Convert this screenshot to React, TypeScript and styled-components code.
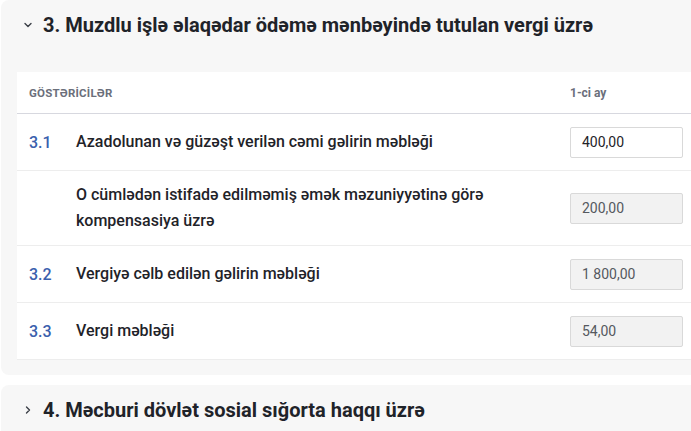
import React from "react";
import styled, { createGlobalStyle } from "styled-components";

const Global = createGlobalStyle`
  html, body { margin: 0; padding: 0; background: #ffffff; overflow: hidden; }
  body { font-family: Roboto, "Noto Sans", "Liberation Sans", sans-serif; }
  * { box-sizing: border-box; }
`;

const Page = styled.div`
  display: flex;
  flex-direction: column;
  gap: 10px;
  padding-left: 1px;
  width: calc(100% + 20px);
`;

const Card = styled.section<{ $open?: boolean }>`
  background: #f7f7f7;
  border-radius: 8px;
  padding: ${(p) => (p.$open ? "11px 0 15px 16px" : "11px 0 20px 16px")};
  display: flex;
  flex-direction: column;
  gap: 33px;
`;

const TitleRow = styled.div`
  display: flex;
  align-items: center;
  gap: 9px;
  padding-left: 5px;
`;

const Chevron = styled.svg`
  width: 12px;
  height: 12px;
  flex: none;
  color: #3b3f47;
`;

const Title = styled.h2`
  margin: 0;
  font-size: 20px;
  line-height: 28px;
  font-weight: 700;
  color: #1f2329;
`;

const Table = styled.div`
  background: #ffffff;
  display: flex;
  flex-direction: column;
`;

const HeadRow = styled.div`
  display: flex;
  align-items: center;
  justify-content: space-between;
  height: 42px;
  padding-left: 12px;
  border-bottom: 1px solid #d7d8df;
`;

const HeadCell = styled.div`
  font-size: 11.5px;
  font-weight: 700;
  color: #6b6f7b;
  letter-spacing: 0.2px;
`;

const HeadValue = styled.div`
  width: 141px;
  font-size: 12px;
  font-weight: 700;
  color: #6b6f7b;
`;

const Row = styled.div`
  display: grid;
  grid-template-columns: 47px 1fr 113px;
  align-items: center;
  padding: 11px 28px 11px 12px;
  min-height: 57px;
  border-bottom: 1px solid #ededed;
`;

const Num = styled.div`
  font-size: 16px;
  color: #3a60ad;
  font-weight: 500;
`;

const Label = styled.div`
  font-size: 16px;
  line-height: 26px;
  font-weight: 500;
  color: #1f2329;
  padding-right: 80px;
`;

const Value = styled.div<{ $disabled?: boolean }>`
  height: 31px;
  border: 1px solid #d9d9d9;
  border-radius: 2px;
  background: ${(p) => (p.$disabled ? "#f2f2f2" : "#ffffff")};
  color: ${(p) => (p.$disabled ? "#55595f" : "#1f2329")};
  font-size: 14px;
  display: flex;
  align-items: center;
  padding-left: 11px;
`;

const rows = [
  { num: "3.1", label: "Azadolunan və güzəşt verilən cəmi gəlirin məbləği", value: "400,00", disabled: false },
  { num: "", label: "O cümlədən istifadə edilməmiş əmək məzuniyyətinə görə kompensasiya üzrə", value: "200,00", disabled: true },
  { num: "3.2", label: "Vergiyə cəlb edilən gəlirin məbləği", value: "1 800,00", disabled: true },
  { num: "3.3", label: "Vergi məbləği", value: "54,00", disabled: true },
];

const Down = () => (
  <Chevron viewBox="0 0 12 12" fill="none">
    <path d="M3 4.5 L6 7.5 L9 4.5" stroke="currentColor" strokeWidth="1.4" strokeLinecap="round" strokeLinejoin="round" />
  </Chevron>
);

const Right = () => (
  <Chevron viewBox="0 0 12 12" fill="none">
    <path d="M4.5 3 L7.5 6 L4.5 9" stroke="currentColor" strokeWidth="1.4" strokeLinecap="round" strokeLinejoin="round" />
  </Chevron>
);

export default function App() {
  return (
    <>
      <Global />
      <Page>
        <Card $open>
          <TitleRow>
            <Down />
            <Title>3. Muzdlu işlə əlaqədar ödəmə mənbəyində tutulan vergi üzrə</Title>
          </TitleRow>
          <Table>
            <HeadRow>
              <HeadCell>GÖSTƏRİCİLƏR</HeadCell>
              <HeadValue>1-ci ay</HeadValue>
            </HeadRow>
            {rows.map((r, i) => (
              <Row key={i}>
                <Num>{r.num}</Num>
                <Label>{r.label}</Label>
                <Value $disabled={r.disabled}>{r.value}</Value>
              </Row>
            ))}
          </Table>
        </Card>
        <Card>
          <TitleRow>
            <Right />
            <Title>4. Məcburi dövlət sosial sığorta haqqı üzrə</Title>
          </TitleRow>
        </Card>
      </Page>
    </>
  );
}
